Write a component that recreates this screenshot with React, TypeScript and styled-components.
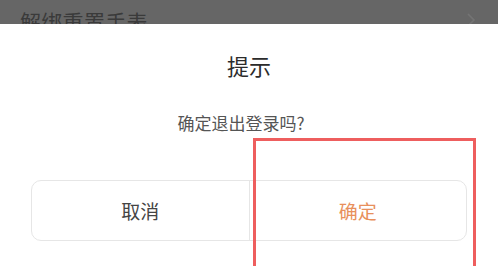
import React from 'react'
import styled, { createGlobalStyle } from 'styled-components'

const Global = createGlobalStyle`
  html, body {
    margin: 0;
    padding: 0;
    background: #ffffff;
  }
  body {
    font-family: "Noto Sans CJK SC", "Noto Sans", sans-serif;
  }
`

const Page = styled.div`
  position: relative;
  width: 498px;
  height: 266px;
  overflow: hidden;
  display: flex;
  flex-direction: column;
`

const TopBar = styled.div`
  height: 24px;
  flex: none;
  background: #666666;
  overflow: hidden;
  display: flex;
  justify-content: space-between;
  padding: 0 22px 0 20px;
`

const TopTitle = styled.div`
  font-size: 21px;
  line-height: 24px;
  margin-top: 9px;
  color: #3a3a3a;
  letter-spacing: 0.3px;
`

const Chevron = styled.svg`
  margin-top: 13px;
`

const Sheet = styled.div`
  flex: 1;
  background: #fff;
  display: flex;
  flex-direction: column;
  align-items: center;
`

const Title = styled.div`
  margin-top: 25px;
  font-size: 22px;
  line-height: 32px;
  color: #2b2b2b;
`

const Message = styled.div`
  margin-top: 30px;
  font-size: 17px;
  line-height: 24px;
  color: #555;
  padding-right: 16px;
`

const Actions = styled.div`
  margin-top: 45px;
  width: 436px;
  height: 61px;
  box-sizing: border-box;
  border: 1px solid #e6e6e6;
  border-radius: 10px;
  display: flex;
`

const Action = styled.div<{ $primary?: boolean }>`
  flex: 1;
  display: flex;
  align-items: center;
  justify-content: center;
  font-size: 19px;
  color: ${p => (p.$primary ? '#e8905c' : '#444')};
  & + & {
    border-left: 1px solid #e6e6e6;
  }
`

const Highlight = styled.div`
  position: absolute;
  left: 253px;
  top: 138px;
  width: 223px;
  height: 140px;
  box-sizing: border-box;
  border: 3px solid #ee5e5e;
  pointer-events: none;
`

export default function App() {
  return (
    <Page>
      <Global />
      <TopBar>
        <TopTitle>解绑重置手表</TopTitle>
        <Chevron width="10" height="14" viewBox="0 0 10 14">
          <path d="M2 1 L8 7 L2 13" fill="none" stroke="#747474" strokeWidth="1.6" />
        </Chevron>
      </TopBar>
      <Sheet>
        <Title>提示</Title>
        <Message>确定退出登录吗?</Message>
        <Actions>
          <Action>取消</Action>
          <Action $primary>确定</Action>
        </Actions>
      </Sheet>
      <Highlight />
    </Page>
  )
}
